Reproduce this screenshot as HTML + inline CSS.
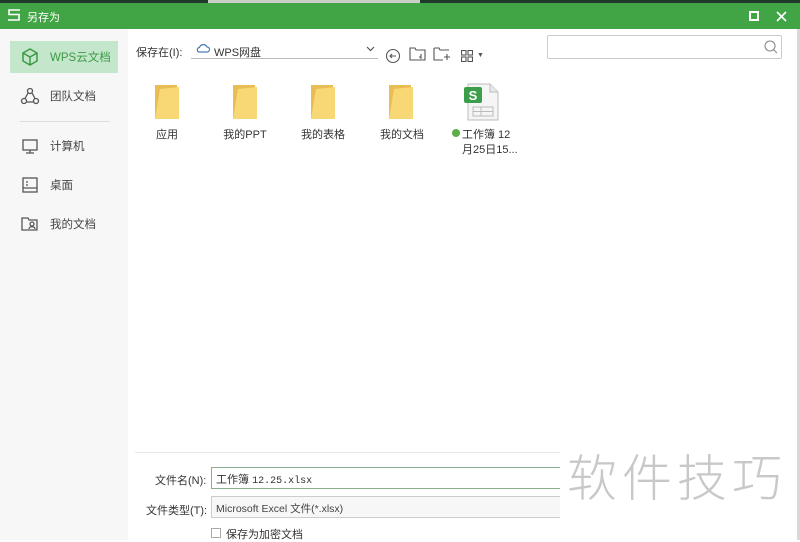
<!DOCTYPE html>
<html><head><meta charset="utf-8"><style>
*{margin:0;padding:0;box-sizing:border-box}
body{width:800px;height:540px;overflow:hidden;background:#fff;font-family:"Liberation Sans","Noto Sans CJK SC",sans-serif;font-size:11px;color:#333;position:relative}
.a{position:absolute}
.top{left:0;top:0;width:800px;height:3px;background:#1f3a2a}
.title{left:0;top:3px;width:800px;height:26px;background:#42a545;color:#fff}
.side{left:0;top:29px;width:128px;height:511px;background:#f7f7f7}
.nav{left:10px;width:108px;height:32px;display:flex;align-items:center;padding-left:10px;font-size:11.5px;color:#444}
.nav svg{margin-right:10px}
.lbl{font-size:11px;color:#333;text-align:center;width:70px}
</style></head><body>
<div class="a top"></div>
<div class="a" style="left:208px;top:0;width:212px;height:3px;background:#c8d0c8"></div>
<div class="a title">
 <svg class="a" style="left:7px;top:6px" width="14" height="12" viewBox="0 0 14 12" fill="none" stroke="#fff" stroke-width="1.6"><path d="M13 1H2V5.5H12V11H1"/></svg>
 <div class="a" style="left:27px;top:6px;font-size:11px">另存为</div>
 <div class="a" style="left:749px;top:8px;width:10px;height:10px;border:2px solid #fff"></div>
 <svg class="a" style="left:776px;top:8px" width="11" height="11" viewBox="0 0 11 11" stroke="#fff" stroke-width="1.6"><path d="M1 1L10 10M10 1L1 10"/></svg>
</div>
<div class="a side"></div>
<div class="a nav" style="top:41px;background:#c4e6cb;color:#3a9a44">
<svg width="20" height="20" viewBox="0 0 20 20" fill="none" stroke="#3a9a44" stroke-width="1.5"><path d="M10 2L17 6V14L10 18L3 14V6Z M3 6L10 10L17 6 M10 10V18"/></svg>WPS云文档</div>
<div class="a nav" style="top:80px"><svg width="20" height="20" viewBox="0 0 20 20" fill="none" stroke="#555" stroke-width="1.3"><circle cx="10" cy="5" r="2.5"/><circle cx="4" cy="15" r="2.5"/><circle cx="16" cy="15" r="2.5"/><path d="M8 7L5 12.5M12 7L15 12.5M6.5 16H13.5"/></svg>团队文档</div>
<div class="a" style="left:20px;top:121px;width:90px;height:1px;background:#ddd"></div>
<div class="a nav" style="top:130px"><svg width="20" height="20" viewBox="0 0 20 20" fill="none" stroke="#555" stroke-width="1.3"><rect x="3" y="4" width="14" height="10"/><path d="M10 14V17M6 17H14"/></svg>计算机</div>
<div class="a nav" style="top:169px"><svg width="20" height="20" viewBox="0 0 20 20" fill="none" stroke="#555" stroke-width="1.3"><rect x="3" y="3" width="14" height="14"/><path d="M6 7H8M6 10H8M3 13H17"/></svg>桌面</div>
<div class="a nav" style="top:208px"><svg width="20" height="20" viewBox="0 0 20 20" fill="none" stroke="#555" stroke-width="1.3"><path d="M2 4H8L9 6H17V16H2Z"/><circle cx="12" cy="10" r="2"/><path d="M9 15C9 12 15 12 15 15"/></svg>我的文档</div>

<div class="a" style="left:136px;top:44px;font-size:11px">保存在(I):</div>
<div class="a" style="left:191px;top:40px;width:187px;height:19px;border-bottom:1px solid #bbb"></div>
<svg class="a" style="left:196px;top:43px" width="14" height="10" viewBox="0 0 14 10" fill="none" stroke="#4a7fb0" stroke-width="1.2"><path d="M3 9H11A2.5 2.5 0 0 0 11 4A4 4 0 0 0 3.5 4.5A2.3 2.3 0 0 0 3 9Z"/></svg>
<div class="a" style="left:214px;top:44px;font-size:11px">WPS网盘</div>
<svg class="a" style="left:366px;top:46px" width="9" height="6" viewBox="0 0 9 6" fill="none" stroke="#555" stroke-width="1.2"><path d="M1 1L4.5 4.5L8 1"/></svg>
<svg class="a" style="left:385px;top:48px" width="16" height="16" viewBox="0 0 16 16" fill="none" stroke="#555" stroke-width="1.1"><circle cx="8" cy="8" r="6.5"/><path d="M11 8H5M7 6L5 8L7 10"/></svg>
<svg class="a" style="left:409px;top:46px" width="18" height="16" viewBox="0 0 18 16" fill="none" stroke="#555" stroke-width="1.1"><path d="M1 2H6L7 4H16V14H1Z M12 8V13M10 11H12"/></svg>
<svg class="a" style="left:433px;top:46px" width="18" height="16" viewBox="0 0 18 16" fill="none" stroke="#555" stroke-width="1.1"><path d="M1 2H6L7 4H16M1 2V14H10M14 8V14M11 11H17"/></svg>
<svg class="a" style="left:461px;top:50px" width="12" height="12" viewBox="0 0 12 12" fill="none" stroke="#555" stroke-width="1.1"><rect x="0.5" y="0.5" width="4.5" height="4.5"/><rect x="7" y="0.5" width="4.5" height="4.5"/><rect x="0.5" y="7" width="4.5" height="4.5"/><rect x="7" y="7" width="4.5" height="4.5"/></svg>
<div class="a" style="left:477px;top:52px;font-size:7px;color:#555">▼</div>

<div class="a" style="left:547px;top:35px;width:235px;height:24px;border:1px solid #ccc;border-radius:2px"></div>
<svg class="a" style="left:763px;top:39px" width="16" height="16" viewBox="0 0 16 16" fill="none" stroke="#888" stroke-width="1.1"><circle cx="7" cy="7" r="5"/><path d="M10.5 10.5L14 14"/></svg>

<svg class="a" style="left:155px;top:85px" width="25" height="35" viewBox="0 0 25 35"><path d="M0 0H22V34H0Z" fill="#e8be54"/><path d="M5 4L24 2V34H5L0 34Z" fill="#f8d775"/></svg>
<svg class="a" style="left:233px;top:85px" width="25" height="35" viewBox="0 0 25 35"><path d="M0 0H22V34H0Z" fill="#e8be54"/><path d="M5 4L24 2V34H5L0 34Z" fill="#f8d775"/></svg>
<svg class="a" style="left:311px;top:85px" width="25" height="35" viewBox="0 0 25 35"><path d="M0 0H22V34H0Z" fill="#e8be54"/><path d="M5 4L24 2V34H5L0 34Z" fill="#f8d775"/></svg>
<svg class="a" style="left:389px;top:85px" width="25" height="35" viewBox="0 0 25 35"><path d="M0 0H22V34H0Z" fill="#e8be54"/><path d="M5 4L24 2V34H5L0 34Z" fill="#f8d775"/></svg>
<div class="a lbl" style="left:132px;top:126px">应用</div>
<div class="a lbl" style="left:210px;top:126px">我的PPT</div>
<div class="a lbl" style="left:288px;top:126px">我的表格</div>
<div class="a lbl" style="left:367px;top:126px">我的文档</div>
<svg class="a" style="left:463px;top:83px" width="36" height="38" viewBox="0 0 36 38"><path d="M5 1H27L35 9V37H5Z" fill="#f5f5f5" stroke="#bbb"/><path d="M27 1V9H35" fill="#e8e8e8" stroke="#bbb"/><rect x="10" y="24" width="20" height="9" fill="none" stroke="#bbb"/><path d="M10 28.5H30M18 24V33" stroke="#bbb"/><rect x="1" y="4" width="18" height="16" rx="2" fill="#3c9d4a"/><text x="10" y="17" fill="#fff" font-size="13" font-weight="bold" text-anchor="middle" font-family="Liberation Sans">S</text></svg>
<div class="a" style="left:452px;top:129px;width:8px;height:8px;border-radius:50%;background:#5cae4a"></div>
<div class="a" style="left:462px;top:126px">工作簿 12</div>
<div class="a" style="left:462px;top:141px">月25日15...</div>

<div class="a" style="left:135px;top:452px;width:425px;height:1px;background:#e8e8e8"></div>
<div class="a" style="left:155px;top:472px">文件名(N):</div>
<div class="a" style="left:211px;top:467px;width:349px;height:22px;border:1px solid #8ab08e;border-right:none;padding:3px 4px;font-size:11px">工作簿 <span style="font-family:'Liberation Mono';font-size:10px">12.25.xlsx</span></div>
<div class="a" style="left:146px;top:502px">文件类型(T):</div>
<div class="a" style="left:211px;top:496px;width:349px;height:22px;border:1px solid #ccc;border-right:none;background:#f7f7f7;padding:4px 4px;font-size:10.5px;color:#444">Microsoft Excel 文件(*.xlsx)</div>
<div class="a" style="left:211px;top:528px;width:10px;height:10px;border:1px solid #aaa"></div>
<div class="a" style="left:226px;top:526px">保存为加密文档</div>
<div class="a" style="left:567px;top:440px;font-size:50px;line-height:70px;color:#c8c8c8;letter-spacing:5px;font-family:'Noto Sans CJK SC',sans-serif;font-weight:300;white-space:nowrap">软件技巧</div>
<div class="a" style="left:797px;top:29px;width:3px;height:511px;background:#d8d8d8"></div>
</body></html>
